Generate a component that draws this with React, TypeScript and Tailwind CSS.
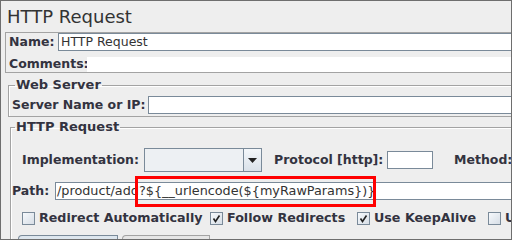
const FONT = "font-['DejaVu_Sans',sans-serif]";

function Check({ on }: { on?: boolean }) {
  return (
    <span className="grid h-[13px] w-[13px] shrink-0 place-items-center border border-[#7a8a99] bg-gradient-to-br from-[#f6f9fc] to-[#d7dee6]">
      {on && (
        <svg width="9" height="9" viewBox="0 0 9 9">
          <path d="M1.5 4.5 L3.5 7.5 L7.5 1.5" fill="none" stroke="#222" strokeWidth="1.6" />
        </svg>
      )}
    </span>
  );
}

function Opt({ label, on, w }: { label: string; on?: boolean; w: string }) {
  return (
    <div className={`flex shrink-0 items-center gap-[4px] whitespace-nowrap ${w}`}>
      <Check on={on} />
      <span className="font-bold">{label}</span>
    </div>
  );
}

export default function App() {
  return (
    <div
      className={`${FONT} h-[240px] w-[512px] overflow-hidden border border-[#6e6e6e] bg-[#eeeeee] text-[12.5px] leading-none whitespace-nowrap text-[#333340]`}
    >
      <div className="w-[560px]">
        <div className="flex h-[31px] items-center pl-[6px] text-[18px] text-[#333]">HTTP Request</div>

        <div className="ml-[4px] h-[41px] border border-[#a3a3a3]">
          <div className="flex h-[18px] items-center">
            <span className="w-[52px] shrink-0 pl-[3px] font-bold">Name:</span>
            <div className="flex h-[18px] flex-1 items-center border border-[#7a8a99] bg-white pl-[2px] text-[#333]">
              HTTP Request
            </div>
          </div>
          <div className="mt-[6px] flex h-[15px] items-center">
            <span className="w-[81px] shrink-0 pl-[3px] font-bold">Comments:</span>
            <div className="h-[15px] flex-1 bg-white" />
          </div>
        </div>

        <fieldset className="ml-[7px] mt-[5px] h-[39px] border border-[#a3a3a3] shadow-[inset_1px_1px_0_white]">
          <legend className="ml-[6px] h-[14px] px-[1px] text-[13px] leading-[14px] font-bold">Web Server</legend>
          <div className="mt-[4px] flex h-[18px] items-center">
            <span className="w-[139px] shrink-0 pl-[3px] font-bold">Server Name or IP:</span>
            <div className="h-[18px] flex-1 border border-[#7a8a99] bg-white" />
          </div>
        </fieldset>

        <fieldset className="ml-[9px] mt-[3px] h-[140px] border border-[#a3a3a3] shadow-[inset_1px_1px_0_white]">
          <legend className="ml-[4px] h-[14px] px-[1px] text-[13px] leading-[14px] font-bold">HTTP Request</legend>

          <div className="mt-[14px] flex h-[24px] items-center">
            <span className="w-[133px] shrink-0 pl-[11px] font-bold">Implementation:</span>
            <div className="flex h-[24px] w-[118px] shrink-0 border border-[#7a8a99] bg-[#edf0f3]">
              <div className="flex-1" />
              <div className="grid w-[18px] place-items-center border-l border-[#7a8a99] bg-gradient-to-b from-[#f4f7fa] to-[#d9e1e9]">
                <svg width="9" height="5" viewBox="0 0 9 5">
                  <path d="M0 0 H9 L4.5 5 Z" fill="#222" />
                </svg>
              </div>
            </div>
            <span className="ml-[12px] w-[113px] shrink-0 font-bold">Protocol [http]:</span>
            <div className="h-[18px] w-[46px] shrink-0 border border-[#7a8a99] bg-white" />
            <span className="ml-[21px] shrink-0 font-bold">Method:</span>
          </div>

          <div className="mt-[10px] flex h-[18px] items-center">
            <span className="w-[44px] shrink-0 pl-[1px] font-bold">Path:</span>
            <div className="relative flex h-[18px] flex-1 items-center border border-[#7a8a99] bg-white pl-[1px] text-[12.8px] text-[#333]">
              /product/add?${"{"}__urlencode(${"{"}myRawParams{"}"}){"}"}
              <div className="absolute left-[79px] top-[-7px] h-[31px] w-[241px] border-[3px] border-[#ff0000]" />
            </div>
          </div>

          <div className="mt-[12px] flex h-[13px] items-center pl-[11px] text-[12.7px]">
            <Opt label="Redirect Automatically" w="w-[188px]" />
            <Opt label="Follow Redirects" on w="w-[147px]" />
            <Opt label="Use KeepAlive" on w="w-[131px]" />
            <Opt label="Use multipart/form-data" w="w-[200px]" />
          </div>

          <div className="ml-[7px] mt-[10px] flex gap-[4px]">
            <div className="h-[10px] w-[100px] rounded-tl-[4px] border border-b-0 border-[#7a8a99] bg-[#dde6ee]" />
            <div className="h-[10px] w-[88px] rounded-tl-[4px] border border-b-0 border-[#a3a3a3] bg-[#e6e6e6]" />
          </div>
        </fieldset>
      </div>
    </div>
  );
}
